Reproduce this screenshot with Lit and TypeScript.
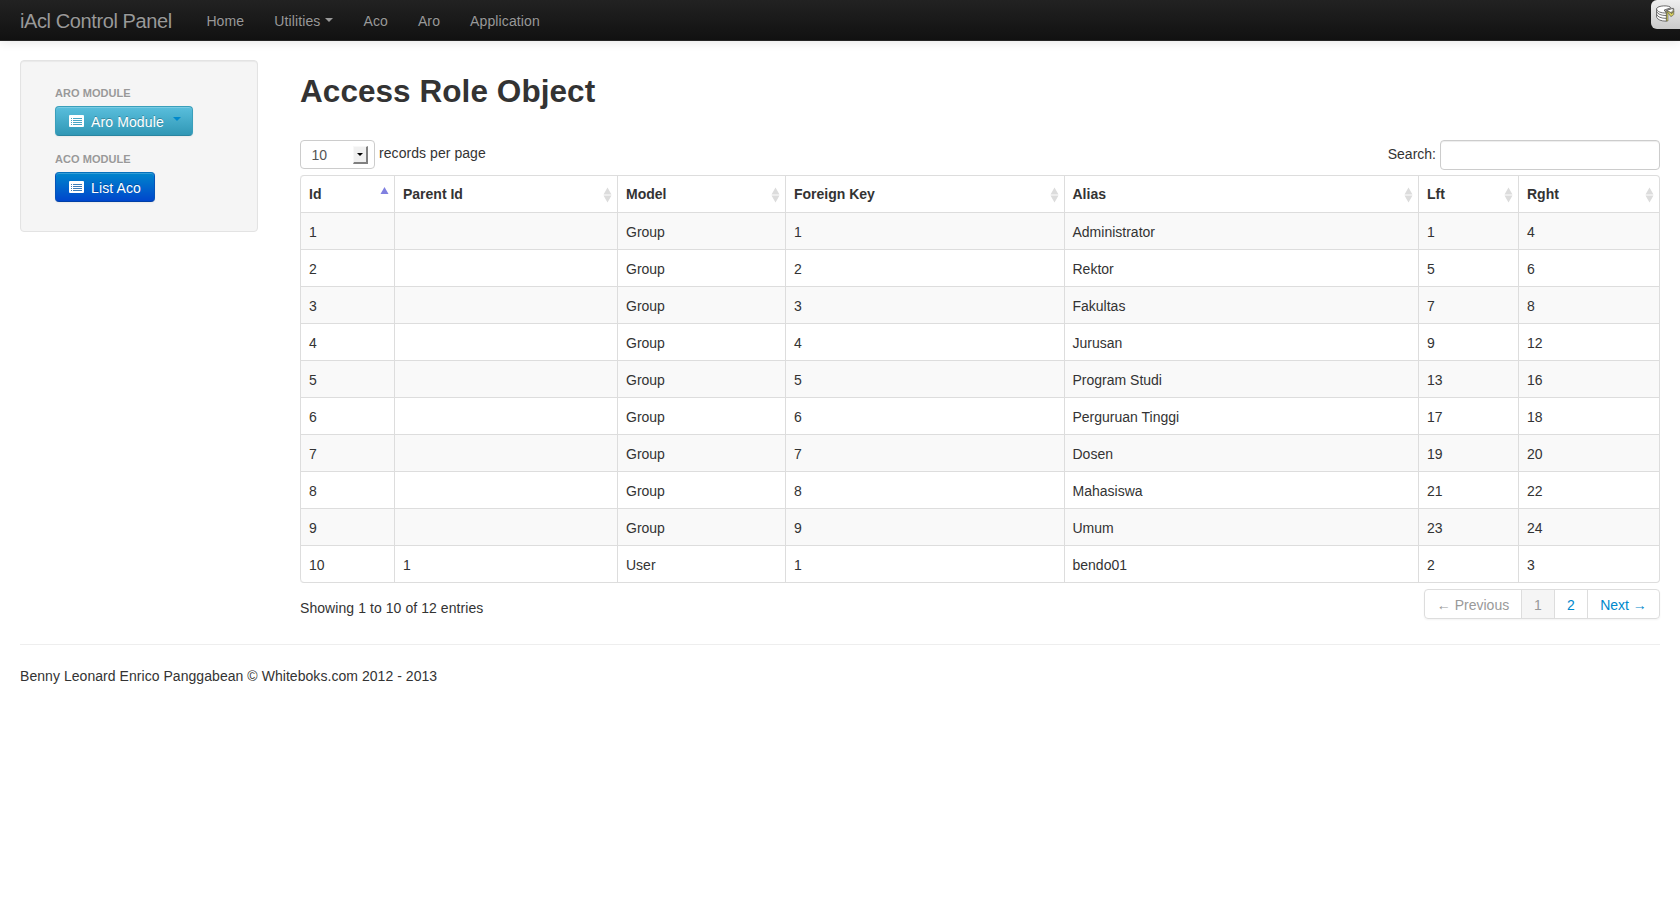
import { LitElement, html, css, svg } from "lit";
import { customElement, property } from "lit/decorators.js";

interface Column { label: string; width: number; sorted?: boolean }

const COLUMNS: Column[] = [
  { label: "Id", width: 94, sorted: true },
  { label: "Parent Id", width: 223 },
  { label: "Model", width: 168 },
  { label: "Foreign Key", width: 279 },
  { label: "Alias", width: 354 },
  { label: "Lft", width: 100 },
  { label: "Rght", width: 141 },
];

const ROWS: string[][] = [
  ["1", "", "Group", "1", "Administrator", "1", "4"],
  ["2", "", "Group", "2", "Rektor", "5", "6"],
  ["3", "", "Group", "3", "Fakultas", "7", "8"],
  ["4", "", "Group", "4", "Jurusan", "9", "12"],
  ["5", "", "Group", "5", "Program Studi", "13", "16"],
  ["6", "", "Group", "6", "Perguruan Tinggi", "17", "18"],
  ["7", "", "Group", "7", "Dosen", "19", "20"],
  ["8", "", "Group", "8", "Mahasiswa", "21", "22"],
  ["9", "", "Group", "9", "Umum", "23", "24"],
  ["10", "1", "User", "1", "bendo01", "2", "3"],
];

const listIcon = html`<svg class="icon" width="15" height="12" viewBox="0 0 15 12">
  <rect width="15" height="12" rx="1" fill="#fff" />
  <path d="M2 3.5h1M4 3.5h9M2 5.5h1M4 5.5h9M2 7.5h1M4 7.5h9M2 9.5h1M4 9.5h9" stroke="currentColor" stroke-width="1" />
</svg>`;

@customElement("nav-bar")
export class NavBar extends LitElement {
  static styles = css`
    :host { display: block; position: relative; z-index: 1; }
    .bar {
      box-sizing: border-box; height: 41px; display: flex; align-items: center;
      padding-left: 20px; background: linear-gradient(#222, #111);
      border-bottom: 1px solid #252525; box-shadow: 0 1px 10px rgba(0, 0, 0, 0.1);
      color: #999; line-height: 20px; text-shadow: 0 -1px 0 rgba(0, 0, 0, 0.25);
    }
    .brand { font-size: 20px; width: 171.4px; letter-spacing: -0.4px; white-space: nowrap; padding-top: 1px; }
    .links { display: flex; padding-top: 1px; letter-spacing: 0.12px; }
    .link { padding: 0 15px; white-space: nowrap; display: flex; }
    .caret { border: 4px solid transparent; border-top-color: #999; border-bottom: 0; margin: 7px 0 0 5px; height: 0; }
    .debug {
      position: absolute; right: 0; top: 0; width: 29px; height: 29px; box-sizing: border-box;
      border-radius: 6px 0 0 6px; background: linear-gradient(#efefef, #cacaca); padding: 5px 0 0 5px;
    }
    .debug svg { display: block; }
  `;
  render() {
    return html`<nav class="bar">
      <div class="brand">iAcl Control Panel</div>
      <div class="links">
        <div class="link">Home</div>
        <div class="link">Utilities<span class="caret"></span></div>
        <div class="link">Aco</div>
        <div class="link">Aro</div>
        <div class="link">Application</div>
      </div>
      <div class="debug">
        <svg width="19" height="18" viewBox="0 0 19 18" stroke="#4a4a4a" stroke-width=".8" stroke-linejoin="round">
          <path d="M.6 3.8v8.4q1.6 3.8 9.8 4V8L7 4z" fill="#fff" />
          <path d="M8.4 5.4l2 2.4v8.4l1.6-.3V7z" fill="#d6cf5c" stroke-width=".5" />
          <path d="M.6 3.8C1.2.2 14 0 15 2.8L8.2 5l2.2 3C5 8.2.8 6.6.6 3.8z" fill="#fff" />
          <path d="M10.6 5.6l7.2-1.8v5.6q-1.2 1.6-3 2.2z" fill="#d6cf5c" stroke-width=".6" />
          <path d="M10.6 5.4l6.6-2.2q1.2 2.2-2.2 4.4z" fill="#fff" />
          <path d="M.6 6.6q1.6 3.8 9.8 4M.6 9.4q1.6 3.8 9.8 4M15 8.6q2-.8 2.8-2.2" fill="none" />
        </svg>
      </div>
    </nav>`;
  }
}

@customElement("side-panel")
export class SidePanel extends LitElement {
  static styles = css`
    :host {
      display: block; box-sizing: border-box; width: 238px; height: 172px; background: #f5f5f5;
      border: 1px solid #e3e3e3; border-radius: 4px; box-shadow: inset 0 1px 1px rgba(0, 0, 0, 0.05);
      padding: 22px 34px;
    }
    .title { font-size: 11px; font-weight: bold; line-height: 20px; color: #999; text-shadow: 0 1px 0 rgba(255, 255, 255, 0.5); padding-bottom: 3px; letter-spacing: 0.05px; }
    .btn {
      box-sizing: border-box; height: 30px; display: flex; align-items: center; width: max-content;
      padding: 1px 13px 0; border: 1px solid; border-radius: 4px; margin-bottom: 13px;
      color: #fff; line-height: 20px; text-shadow: 0 -1px 0 rgba(0, 0, 0, 0.25);
      box-shadow: inset 0 1px 0 rgba(255, 255, 255, 0.2), 0 1px 2px rgba(0, 0, 0, 0.05);
      white-space: nowrap; letter-spacing: 0.12px;
    }
    .btn .icon { display: block; margin: -1px 7px 0 0; flex: none; }
    .info { width: 138px; background: linear-gradient(#5bc0de, #2f96b4) border-box; border-color: #3a9fbb #3a9fbb #2a85a0; }
    .info .icon { color: #48a5c4; }
    .primary { width: 100px; background: linear-gradient(#08c, #04c) border-box; border-color: #0571bd #0553b8 #003fa6; }
    .primary .icon { color: #3c7cb8; }
    .caret { border: 4px solid transparent; border-top-color: #08c; border-bottom: 0; margin: -6px 0 0 9px; }
  `;
  render() {
    return html`
      <div class="title">ARO MODULE</div>
      <div class="btn info">${listIcon}Aro Module<span class="caret"></span></div>
      <div class="title">ACO MODULE</div>
      <div class="btn primary">${listIcon}List Aco</div>
    `;
  }
}

@customElement("data-grid")
export class DataGrid extends LitElement {
  @property({ attribute: false }) columns: Column[] = [];
  @property({ attribute: false }) rows: string[][] = [];
  static styles = css`
    :host { display: block; }
    table {
      width: 100%; table-layout: fixed; border-collapse: separate; border-spacing: 0;
      border: 1px solid #ddd; border-left: 0; border-radius: 4px;
    }
    th, td {
      box-sizing: border-box; height: 37px; padding: 2px 8px 0; line-height: 20px; text-align: left;
      border-left: 1px solid #ddd; border-top: 1px solid #ddd; vertical-align: middle;
    }
    th { height: 36px; border-top: 0; padding-top: 0; padding-bottom: 1px; }
    td:nth-child(5), th:nth-child(5) { padding-left: 7.5px; }
    .head { display: flex; justify-content: space-between; align-items: center; }
    .sort { flex: none; margin: 2px -3px 0 0; }
    tbody tr:nth-child(odd) td { background: #f9f9f9; }
    th:first-child { border-top-left-radius: 4px; }
    tr:last-child td:first-child { border-bottom-left-radius: 4px; }
  `;
  render() {
    return html`<table>
      <colgroup>${this.columns.map((c) => html`<col style="width:${c.width}px" />`)}</colgroup>
      <thead><tr>${this.columns.map((c) => html`<th><div class="head">${c.label}
        <svg class="sort" width="9" height="16" viewBox="0 0 9 16">
          ${c.sorted
            ? svg`<path d="M4.5 0L8.5 7H.5z" fill="#8080e0" />`
            : svg`<path d="M4.5 0.5L8.5 7.5H.5zM.5 8.5h8L4.5 15.5z" fill="#dcdcdc" />`}
        </svg></div></th>`)}</tr></thead>
      <tbody>${this.rows.map((r) => html`<tr>${r.map((v) => html`<td>${v}</td>`)}</tr>`)}</tbody>
    </table>`;
  }
}

@customElement("app-root")
export class AppRoot extends LitElement {
  static styles = css`
    :host {
      display: block; min-height: 914px; background: #fff; color: #333;
      font: 14px/20px "Liberation Sans", Arial, sans-serif;
    }
    .body { display: flex; gap: 42px; padding: 19px 20px 0; }
    side-panel { flex: none; }
    main { flex: 1; min-width: 0; }
    h2 { margin: 0; padding-top: 11px; font-size: 31.5px; line-height: 40px; height: 40px; letter-spacing: 0.06px; }
    .tools { display: flex; justify-content: space-between; margin-top: 29px; height: 35px; }
    .length, .search { display: flex; align-items: flex-start; }
    .select {
      box-sizing: border-box; width: 75px; height: 29px; border: 1px solid #ccc; border-radius: 4px;
      display: flex; justify-content: space-between; align-items: center; padding: 0 6px 0 10.5px; color: #555;
      margin-right: 4px;
    }
    .arrow {
      box-sizing: border-box; width: 15px; height: 18px; background: #f0f0f0; border: 1px solid #f8f8f8;
      border-right: 2px solid #808080; border-bottom: 2px solid #808080; display: flex; justify-content: center; align-items: center;
    }
    .arrow::after { content: ""; border: 3.5px solid transparent; border-top-color: #000; border-bottom: 0; }
    .length .label { padding-top: 3px; letter-spacing: 0.06px; }
    .search .label { padding: 4px 4px 0 0; }
    .input {
      box-sizing: border-box; width: 220px; height: 30px; border: 1px solid #ccc; border-radius: 4px;
      box-shadow: inset 0 1px 1px rgba(0, 0, 0, 0.075);
    }
    .foot { display: flex; justify-content: space-between; padding-top: 6px; }
    .info { padding-top: 9px; letter-spacing: 0.07px; }
    .pages {
      box-sizing: border-box; height: 30px; display: flex; border: 1px solid #ddd; border-radius: 4px;
      box-shadow: 0 1px 2px rgba(0, 0, 0, 0.05); overflow: hidden; color: #08c;
    }
    .page { box-sizing: border-box; line-height: 30px; text-align: center; border-left: 1px solid #ddd; width: 33px; white-space: nowrap; }
    .prev { width: 96px; border-left: 0; color: #999; }
    .next { width: 72px; }
    .glyph { font-family: "Liberation Serif", serif; font-size: 14px; line-height: 1; }
    .active { background: #f5f5f5; color: #999; }
    footer { margin: 25px 20px 0; border-top: 1px solid #eee; padding-top: 21px; letter-spacing: 0.05px; }
  `;
  render() {
    return html`
      <nav-bar></nav-bar>
      <div class="body">
        <side-panel></side-panel>
        <main>
          <h2>Access Role Object</h2>
          <div class="tools">
            <div class="length">
              <div class="select"><span>10</span><span class="arrow"></span></div>
              <span class="label">records per page</span>
            </div>
            <div class="search"><span class="label">Search:</span><div class="input"></div></div>
          </div>
          <data-grid .columns=${COLUMNS} .rows=${ROWS}></data-grid>
          <div class="foot">
            <div class="info">Showing 1 to 10 of 12 entries</div>
            <div class="pages">
              <div class="page prev"><span class="glyph">←</span> Previous</div>
              <div class="page active">1</div>
              <div class="page">2</div>
              <div class="page next">Next <span class="glyph">→</span></div>
            </div>
          </div>
        </main>
      </div>
      <footer>Benny Leonard Enrico Panggabean © Whiteboks.com 2012 - 2013</footer>
    `;
  }
}
